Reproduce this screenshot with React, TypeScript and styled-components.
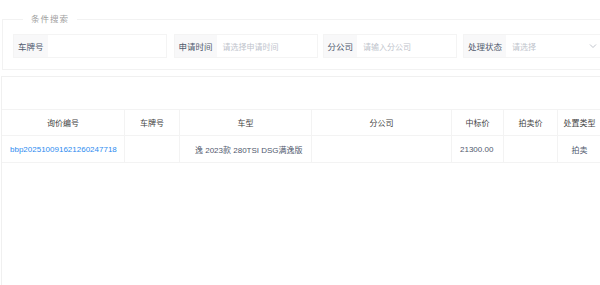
import styled, { createGlobalStyle } from "styled-components";

const Global = createGlobalStyle`
    html, body {
        margin: 0;
        padding: 0;
        background: #fff;
        font-family: "Liberation Sans", "Noto Sans CJK SC", sans-serif;
        overflow: hidden;
    }
`
const Page = styled.div`
    width: 600px;
    height: 285px;
    padding-top: 13px;
    box-sizing: border-box;
    overflow: hidden;
`
const SearchBox = styled.fieldset`
    margin: 0 0 0 2px;
    padding: 9px 0 11px 10px;
    border: 1px solid #f2f2f2;
    border-right: none;
    min-inline-size: 0;
`
const Legend = styled.legend`
    margin-left: 10px;
    padding: 0 8px;
    font-size: 8.5px;
    line-height: 12px;
    letter-spacing: 1px;
    color: #a0a0a0;
`
const FormRow = styled.div`
    display: flex;
    align-items: center;
`
const Group = styled.div<{ $gap: number }>`
    display: flex;
    height: 24px;
    margin-right: ${p => p.$gap}px;
    border: 1px solid #f4f4f4;
    box-sizing: border-box;
`
const Label = styled.div`
    display: flex;
    align-items: center;
    padding: 0 4px;
    background: #f8f8f9;
    font-size: 8.5px;
    color: #515a6e;
    white-space: nowrap;
`
const Input = styled.div<{ $w: number }>`
    width: ${p => p.$w}px;
    display: flex;
    align-items: center;
    justify-content: space-between;
    padding: 0 3px 0 6px;
    box-sizing: border-box;
    font-size: 8px;
    color: #c0c4cc;
    background: #fff;
`
const Chevron = styled.svg`
    width: 8px;
    height: 6px;
`
const TableWrap = styled.div`
    margin: 6px 0 0 1px;
    padding-top: 32px;
    border-top: 1px solid #f0f0f0;
    border-left: 1px solid #f0f0f0;
    height: 300px;
`
const Row = styled.div<{ $h: number }>`
    display: flex;
    height: ${p => p.$h}px;
    border-top: 1px solid #f3f3f3;
`
const Cell = styled.div<{ $w: number; $align?: string; $pl?: number; $color?: string }>`
    flex: 0 0 ${p => p.$w}px;
    display: flex;
    align-items: center;
    justify-content: ${p => p.$align || "center"};
    padding-left: ${p => p.$pl || 0}px;
    box-sizing: border-box;
    border-right: 1px solid #f3f3f3;
    font-size: 8px;
    color: ${p => p.$color || "#515a6e"};
    white-space: nowrap;
    overflow: hidden;
`
const RowEnd = styled.div`
    border-bottom: 1px solid #f3f3f3;
`

const cols = [123, 55, 132, 140, 52, 54, 44]
const heads = ["询价编号", "车牌号", "车型", "分公司", "中标价", "拍卖价", "处置类型"]

export default function App() {
    return (
        <Page>
            <Global />
            <SearchBox>
                <Legend>条件搜索</Legend>
                <FormRow>
                    <Group $gap={7}>
                        <Label>车牌号</Label>
                        <Input $w={118}></Input>
                    </Group>
                    <Group $gap={5}>
                        <Label>申请时间</Label>
                        <Input $w={100}>请选择申请时间</Input>
                    </Group>
                    <Group $gap={6}>
                        <Label>分公司</Label>
                        <Input $w={99}>请输入分公司</Input>
                    </Group>
                    <Group $gap={0}>
                        <Label>处理状态</Label>
                        <Input $w={94}>
                            请选择
                            <Chevron viewBox="0 0 8 6">
                                <path d="M1 1.5 L4 4.5 L7 1.5" fill="none" stroke="#b8bcc4" strokeWidth="0.9" />
                            </Chevron>
                        </Input>
                    </Group>
                </FormRow>
            </SearchBox>
            <TableWrap>
                <Row $h={25}>
                    {heads.map((h, i) => (
                        <Cell key={h} $w={cols[i]} $color="#444">{h}</Cell>
                    ))}
                </Row>
                <RowEnd>
                    <Row $h={26}>
                        <Cell $w={cols[0]} $align="flex-start" $pl={8} $color="#2d8cf0">bbp202510091621260247718</Cell>
                        <Cell $w={cols[1]}></Cell>
                        <Cell $w={cols[2]} $align="flex-start" $pl={15}>逸 2023款 280TSI DSG满逸版</Cell>
                        <Cell $w={cols[3]}></Cell>
                        <Cell $w={cols[4]} $align="flex-start" $pl={8}>21300.00</Cell>
                        <Cell $w={cols[5]}></Cell>
                        <Cell $w={cols[6]}>拍卖</Cell>
                    </Row>
                </RowEnd>
            </TableWrap>
        </Page>
    )
}
